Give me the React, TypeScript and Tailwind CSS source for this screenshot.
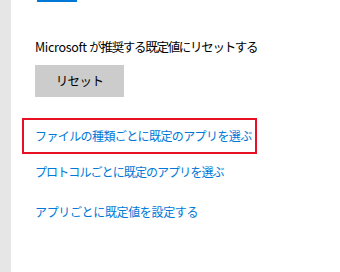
export default function App() {
  const font = {
    fontFamily: '"Noto Sans CJK JP", "Noto Sans", sans-serif',
  };

  return (
    <div className="flex h-[272px] w-[340px] bg-white" style={font}>
      {/* left nav strip */}
      <div className="w-[11px] shrink-0 bg-[#e6e6e6]" />

      <div className="flex flex-1 flex-col">
        <div className="ml-[26px] h-[2px] w-[40px] bg-[#0078d7]" />

        <p className="ml-[24px] mt-[36px] whitespace-nowrap text-[12.5px] leading-[18px] text-black">
          <span className="tracking-[-0.3px]">Microsoft </span>
          <span className="tracking-[-1.3px]">が推奨する既定値にリセットする</span>
        </p>

        <button className="ml-[24px] mt-[9px] flex h-[32px] w-[89px] items-center justify-center bg-[#cccccc] text-[12.5px] tracking-[-0.6px] text-black">
          リセット
        </button>

        <div className="ml-[11px] mt-[21px] flex h-[36px] w-[235px] items-center border-2 border-[#e81123] pl-[11px]">
          <span className="whitespace-nowrap text-[12px] tracking-[-0.6px] text-[#0078d7]">
            ファイルの種類ごとに既定のアプリを選ぶ
          </span>
        </div>

        <span className="ml-[24px] mt-[9px] whitespace-nowrap text-[12px] leading-[18px] tracking-[-0.9px] text-[#0078d7]">
          プロトコルごとに既定のアプリを選ぶ
        </span>

        <span className="ml-[24px] mt-[22px] whitespace-nowrap text-[12px] leading-[18px] tracking-[-0.35px] text-[#0078d7]">
          アプリごとに既定値を設定する
        </span>
      </div>
    </div>
  );
}
